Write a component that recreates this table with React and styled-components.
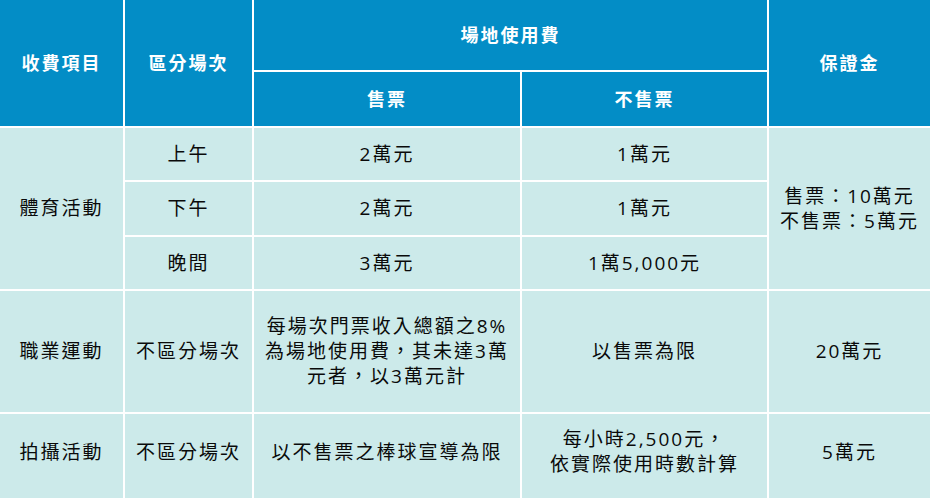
import styled, { createGlobalStyle } from 'styled-components';

const GlobalStyle = createGlobalStyle`
    html, body {
        margin: 0;
        padding: 0;
        background: #ffffff;
    }
    body {
        font-family: "Open Sans", "Noto Sans CJK TC", sans-serif;
    }
`;

const Table = styled.table`
    width: 930px;
    table-layout: fixed;
    border-collapse: collapse;
    border-style: hidden;
    font-size: 19px;
    letter-spacing: 2px;
    line-height: 25px;
    text-align: center;
    color: #0a0a0a;
`;

const HeadCell = styled.th`
    height: ${(p) => p.$h}px;
    padding: 0;
    background: #038dc6;
    color: #ffffff;
    font-size: 18px;
    font-weight: 700;
    border: 2px solid #ffffff;
    vertical-align: middle;
`;

const Cell = styled.td`
    height: ${(p) => p.$h || 52}px;
    padding: 0 0 ${(p) => p.$pb || 0}px;
    background: #cceaea;
    border: 2px solid #ffffff;
    vertical-align: middle;
`;

const rows = [
    { part: '上午', sale: '2萬元', free: '1萬元' },
    { part: '下午', sale: '2萬元', free: '1萬元' },
    { part: '晚間', sale: '3萬元', free: '1萬5,000元' },
];

const App = () => {
    return (
        <>
            <GlobalStyle />
            <Table>
                <colgroup>
                    <col style={{ width: 124 }} />
                    <col style={{ width: 129 }} />
                    <col style={{ width: 268 }} />
                    <col style={{ width: 247 }} />
                    <col style={{ width: 162 }} />
                </colgroup>
                <thead>
                    <tr>
                        <HeadCell rowSpan={2} $h={70}>收費項目</HeadCell>
                        <HeadCell rowSpan={2} $h={70}>區分場次</HeadCell>
                        <HeadCell colSpan={2} $h={70}>場地使用費</HeadCell>
                        <HeadCell rowSpan={2} $h={70}>保證金</HeadCell>
                    </tr>
                    <tr>
                        <HeadCell $h={54}>售票</HeadCell>
                        <HeadCell $h={54}>不售票</HeadCell>
                    </tr>
                </thead>
                <tbody>
                    {rows.map((r, i) => (
                        <tr key={r.part}>
                            {i === 0 && <Cell rowSpan={3}>體育活動</Cell>}
                            <Cell $h={i === 1 ? 53 : 51}>{r.part}</Cell>
                            <Cell>{r.sale}</Cell>
                            <Cell>{r.free}</Cell>
                            {i === 0 && (
                                <Cell rowSpan={3}>
                                    售票：10萬元
                                    <br />
                                    不售票：5萬元
                                </Cell>
                            )}
                        </tr>
                    ))}
                    <tr>
                        <Cell $h={121}>職業運動</Cell>
                        <Cell>不區分場次</Cell>
                        <Cell>
                            每場次門票收入總額之8%
                            <br />
                            為場地使用費，其未達3萬
                            <br />
                            元者，以3萬元計
                        </Cell>
                        <Cell>以售票為限</Cell>
                        <Cell>20萬元</Cell>
                    </tr>
                    <tr>
                        <Cell $h={76} $pb={16}>拍攝活動</Cell>
                        <Cell $pb={16}>不區分場次</Cell>
                        <Cell $pb={16}>以不售票之棒球宣導為限</Cell>
                        <Cell $pb={16}>
                            每小時2,500元，
                            <br />
                            依實際使用時數計算
                        </Cell>
                        <Cell $pb={16}>5萬元</Cell>
                    </tr>
                </tbody>
            </Table>
        </>
    );
};

export default App;
